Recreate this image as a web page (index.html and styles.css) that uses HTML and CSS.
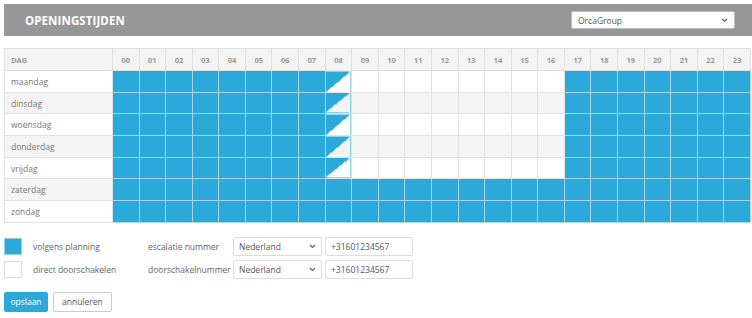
FILE: index.html
```html
<!DOCTYPE html>
<html lang="nl">
<head>
    <meta charset="UTF-8">
    <title>Openingstijden</title>
    <link rel="stylesheet" href="styles.css">
</head>
<body>
    <div class="page-head">
        <h1 class="page-title">OPENINGSTIJDEN</h1>
        <div class="fake-select head-select">
            <span>OrcaGroup</span>
            <svg width="7" height="5" viewBox="0 0 7 5"><path d="M1 1 L3.5 3.5 L6 1" fill="none" stroke="#666" stroke-width="1.2"/></svg>
        </div>
    </div>

    <table class="schedule">
        <thead>
            <tr>
                <th class="day-col">DAG</th>
                <th>00</th><th>01</th><th>02</th><th>03</th><th>04</th><th>05</th><th>06</th><th>07</th>
                <th>08</th><th>09</th><th>10</th><th>11</th><th>12</th><th>13</th><th>14</th><th>15</th>
                <th>16</th><th>17</th><th>18</th><th>19</th><th>20</th><th>21</th><th>22</th><th>23</th>
            </tr>
        </thead>
        <tbody>
            <tr>
                <td class="day-col">maandag</td>
                <td class="on"></td><td class="on"></td><td class="on"></td><td class="on"></td><td class="on"></td><td class="on"></td><td class="on"></td><td class="on"></td>
                <td class="half"></td><td></td><td></td><td></td><td></td><td></td><td></td><td></td>
                <td></td><td class="on"></td><td class="on"></td><td class="on"></td><td class="on"></td><td class="on"></td><td class="on"></td><td class="on"></td>
            </tr>
            <tr>
                <td class="day-col">dinsdag</td>
                <td class="on"></td><td class="on"></td><td class="on"></td><td class="on"></td><td class="on"></td><td class="on"></td><td class="on"></td><td class="on"></td>
                <td class="half"></td><td></td><td></td><td></td><td></td><td></td><td></td><td></td>
                <td></td><td class="on"></td><td class="on"></td><td class="on"></td><td class="on"></td><td class="on"></td><td class="on"></td><td class="on"></td>
            </tr>
            <tr>
                <td class="day-col">woensdag</td>
                <td class="on"></td><td class="on"></td><td class="on"></td><td class="on"></td><td class="on"></td><td class="on"></td><td class="on"></td><td class="on"></td>
                <td class="half"></td><td></td><td></td><td></td><td></td><td></td><td></td><td></td>
                <td></td><td class="on"></td><td class="on"></td><td class="on"></td><td class="on"></td><td class="on"></td><td class="on"></td><td class="on"></td>
            </tr>
            <tr>
                <td class="day-col">donderdag</td>
                <td class="on"></td><td class="on"></td><td class="on"></td><td class="on"></td><td class="on"></td><td class="on"></td><td class="on"></td><td class="on"></td>
                <td class="half"></td><td></td><td></td><td></td><td></td><td></td><td></td><td></td>
                <td></td><td class="on"></td><td class="on"></td><td class="on"></td><td class="on"></td><td class="on"></td><td class="on"></td><td class="on"></td>
            </tr>
            <tr>
                <td class="day-col">vrijdag</td>
                <td class="on"></td><td class="on"></td><td class="on"></td><td class="on"></td><td class="on"></td><td class="on"></td><td class="on"></td><td class="on"></td>
                <td class="half"></td><td></td><td></td><td></td><td></td><td></td><td></td><td></td>
                <td></td><td class="on"></td><td class="on"></td><td class="on"></td><td class="on"></td><td class="on"></td><td class="on"></td><td class="on"></td>
            </tr>
            <tr>
                <td class="day-col">zaterdag</td>
                <td class="on"></td><td class="on"></td><td class="on"></td><td class="on"></td><td class="on"></td><td class="on"></td><td class="on"></td><td class="on"></td>
                <td class="on"></td><td class="on"></td><td class="on"></td><td class="on"></td><td class="on"></td><td class="on"></td><td class="on"></td><td class="on"></td>
                <td class="on"></td><td class="on"></td><td class="on"></td><td class="on"></td><td class="on"></td><td class="on"></td><td class="on"></td><td class="on"></td>
            </tr>
            <tr>
                <td class="day-col">zondag</td>
                <td class="on"></td><td class="on"></td><td class="on"></td><td class="on"></td><td class="on"></td><td class="on"></td><td class="on"></td><td class="on"></td>
                <td class="on"></td><td class="on"></td><td class="on"></td><td class="on"></td><td class="on"></td><td class="on"></td><td class="on"></td><td class="on"></td>
                <td class="on"></td><td class="on"></td><td class="on"></td><td class="on"></td><td class="on"></td><td class="on"></td><td class="on"></td><td class="on"></td>
            </tr>
        </tbody>
    </table>

    <div class="legend">
        <div class="legend-row">
            <div class="swatch swatch-on"></div>
            <div class="legend-label">volgens planning</div>
            <div class="field-label">escalatie nummer</div>
            <div class="fake-select country-select">
                <span>Nederland</span>
                <svg width="7" height="5" viewBox="0 0 7 5"><path d="M1 1 L3.5 3.5 L6 1" fill="none" stroke="#666" stroke-width="1.2"/></svg>
            </div>
            <div class="text-input">+31601234567</div>
        </div>
        <div class="legend-row">
            <div class="swatch"></div>
            <div class="legend-label">direct doorschakelen</div>
            <div class="field-label">doorschakelnummer</div>
            <div class="fake-select country-select">
                <span>Nederland</span>
                <svg width="7" height="5" viewBox="0 0 7 5"><path d="M1 1 L3.5 3.5 L6 1" fill="none" stroke="#666" stroke-width="1.2"/></svg>
            </div>
            <div class="text-input">+31601234567</div>
        </div>
    </div>

    <div class="actions">
        <button class="btn btn-primary">opslaan</button>
        <button class="btn">annuleren</button>
    </div>
</body>
</html>
```

FILE: styles.css
```css
body, html {
    margin: 0;
    padding: 0;
    width: 100%;
    height: 100%;
    overflow: hidden;
    background: white;
}

body {
    padding: 4px 0 0 4px;
    box-sizing: border-box;
    font-family: "Open Sans", Arial, sans-serif;
    color: #666;
}

.page-head {
    height: 32px;
    background: #979797;
    display: flex;
    align-items: center;
    justify-content: space-between;
    padding: 0 17px 0 21px;
}

.page-title {
    margin: 0;
    color: white;
    font-size: 11.5px;
    font-weight: bold;
    letter-spacing: 0.1px;
}

.fake-select {
    background: white;
    border: 1px solid #ddd;
    border-radius: 2px;
    display: flex;
    align-items: center;
    justify-content: space-between;
    box-sizing: border-box;
    font-size: 8.5px;
    color: #555;
}

.head-select {
    width: 164px;
    height: 18px;
    padding: 0 6px 0 6px;
    border-color: #bbb;
}

.schedule {
    margin-top: 12px;
    width: 747px;
    border-collapse: collapse;
    table-layout: fixed;
    border: 1px solid #e0e0e0;
}

.schedule th {
    height: 21px;
    padding: 0;
    background: #f3f3f3;
    border: 1px solid #e0e0e0;
    color: #999;
    font-size: 7.5px;
    font-weight: bold;
    text-align: center;
}

.schedule td {
    height: 20.7px;
    padding: 0;
    border: 1px solid #e2e2e2;
    background: white;
}

.schedule .day-col {
    width: 101px;
    text-align: left;
    padding-left: 6px;
    font-size: 8.5px;
    color: #777;
}

.schedule th.day-col {
    color: #999;
    font-size: 7.5px;
}

.schedule tbody tr.alt td,
.schedule tbody tr:nth-child(even) td:not(.on):not(.half) {
    background: #f4f4f4;
}

.schedule tbody td.on {
    background: #2ba9db;
    border-color: #a9d4e6;
}

.schedule tbody td.half {
    background: linear-gradient(to bottom right, #2ba9db 50%, white 50%);
}

.schedule tbody tr:nth-child(even) td.half {
    background: linear-gradient(to bottom right, #2ba9db 50%, #f4f4f4 50%);
}

.legend {
    margin-top: 14px;
    display: flex;
    flex-direction: column;
    gap: 4px;
}

.legend-row {
    display: flex;
    align-items: center;
    height: 19px;
    font-size: 8.5px;
    color: #666;
}

.swatch {
    width: 18px;
    height: 17px;
    box-sizing: border-box;
    border: 1px solid #ddd;
    background: white;
}

.swatch-on {
    background: #2ba9db;
    border-color: #9ccde2;
}

.legend-label {
    margin-left: 11px;
    width: 115px;
}

.field-label {
    width: 85px;
}

.country-select {
    width: 89px;
    height: 19px;
    padding: 0 5px;
}

.text-input {
    margin-left: 3px;
    width: 88px;
    height: 19px;
    box-sizing: border-box;
    border: 1px solid #ddd;
    border-radius: 2px;
    padding: 0 5px;
    display: flex;
    align-items: center;
    font-size: 8.5px;
    color: #555;
}

.actions {
    margin-top: 13px;
    display: flex;
    gap: 5px;
}

.btn {
    height: 20px;
    padding: 0 8px;
    border: 1px solid #ccc;
    border-radius: 2px;
    background: white;
    color: #555;
    font-family: "Open Sans", Arial, sans-serif;
    font-size: 8.5px;
    cursor: pointer;
}

.btn-primary {
    width: 44px;
    padding: 0;
    background: #2ba9db;
    border-color: #2ba9db;
    color: white;
}
```
